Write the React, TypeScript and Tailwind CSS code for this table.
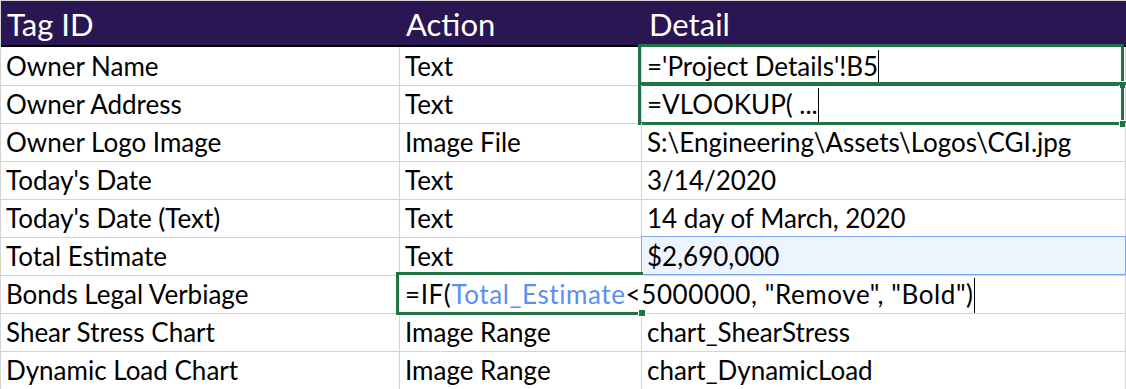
import React from 'react'

type Row = {
  tag: string
  action: React.ReactNode
  detail: React.ReactNode
  detailMark?: 'green-top' | 'green-bottom' | 'blue'
  actionMark?: boolean
}

const Caret = () => (
  <span className="inline-block w-px h-[35px] bg-black align-middle -mt-[4px]" />
)

const rows: Row[] = [
  {
    tag: 'Owner Name',
    action: 'Text',
    detail: (
      <>
        ='Project Details'!B5
        <Caret />
      </>
    ),
    detailMark: 'green-top',
  },
  {
    tag: 'Owner Address',
    action: 'Text',
    detail: (
      <>
        =VLOOKUP( ...
        <Caret />
      </>
    ),
    detailMark: 'green-bottom',
  },
  { tag: 'Owner Logo Image', action: 'Image File', detail: 'S:\\Engineering\\Assets\\Logos\\CGI.jpg' },
  { tag: "Today's Date", action: 'Text', detail: '3/14/2020' },
  { tag: "Today's Date (Text)", action: 'Text', detail: '14 day of March, 2020' },
  { tag: 'Total Estimate', action: 'Text', detail: '$2,690,000', detailMark: 'blue' },
  {
    tag: 'Bonds Legal Verbiage',
    action: (
      <span className="relative z-20 whitespace-nowrap tracking-[0.6px]">
        =IF(<span className="text-[#5b8ff0]">Total_Estimate</span>&lt;5000000, "Remove", "Bold")
        <Caret />
      </span>
    ),
    detail: '',
    actionMark: true,
  },
  { tag: 'Shear Stress Chart', action: 'Image Range', detail: 'chart_ShearStress' },
  { tag: 'Dynamic Load Chart', action: 'Image Range', detail: 'chart_DynamicLoad' },
]

// excel fill handle in the corner of a selection
const Handle = ({ className }: { className: string }) => (
  <span className={`absolute w-[6px] h-[6px] bg-[#217346] border border-white box-content ${className}`} />
)

const App = () => {
  return (
    <div
      className="w-[1126px] h-[389px] overflow-hidden bg-white text-black"
      style={{ fontFamily: 'Lato, "Open Sans", sans-serif' }}
    >
      <div className="border-t border-l border-[#d4d4d4]">
        <div className="grid grid-cols-[399px_242px_484px] h-[46px] bg-[#2a1652] border-b-2 border-black text-white text-[31px] leading-[44px] pt-px">
          <div className="pl-[6px]">Tag ID</div>
          <div className="pl-[6px]">Action</div>
          <div className="pl-[7px]">Detail</div>
        </div>

        {rows.map((row, i) => (
          <div
            key={i}
            className="grid grid-cols-[399px_242px_484px] h-[38px] text-[26px] leading-[38px]"
          >
            <div className="border-r border-b border-[#d4d4d4] pl-[5px] whitespace-nowrap">{row.tag}</div>
            <div className="relative border-r border-b border-[#d4d4d4] pl-[5px] whitespace-nowrap">
              {row.action}
              {row.actionMark && (
                <span className="absolute z-10 left-[-4px] top-[-3px] right-[-2px] bottom-[-2px] border-[3px] border-r-0 border-[#217346] bg-white">
                  <Handle className="right-[-3px] bottom-[-5px]" />
                </span>
              )}
            </div>
            <div
              className={`relative border-r border-b border-[#d4d4d4] pl-[5px] whitespace-nowrap ${
                row.detailMark === 'blue' ? 'bg-[#eef4fd]' : ''
              }`}
            >
              {row.detail}
              {row.detailMark === 'green-top' && (
                <span className="absolute left-[-4px] top-[-3px] right-[1px] bottom-[-1px] border-[3px] border-[#217346]">
                  <Handle className="right-[-6px] bottom-[-6px]" />
                </span>
              )}
              {row.detailMark === 'green-bottom' && (
                <span className="absolute left-[-4px] top-[-3px] right-[1px] bottom-[-2px] border-[3px] border-[#217346]">
                  <Handle className="right-[-6px] bottom-[-6px]" />
                </span>
              )}
              {row.detailMark === 'blue' && (
                <span className="absolute left-[-1px] top-[-1px] right-[-1px] bottom-[0px] border border-[#79a6f2]" />
              )}
            </div>
          </div>
        ))}
      </div>
    </div>
  )
}

export default App
